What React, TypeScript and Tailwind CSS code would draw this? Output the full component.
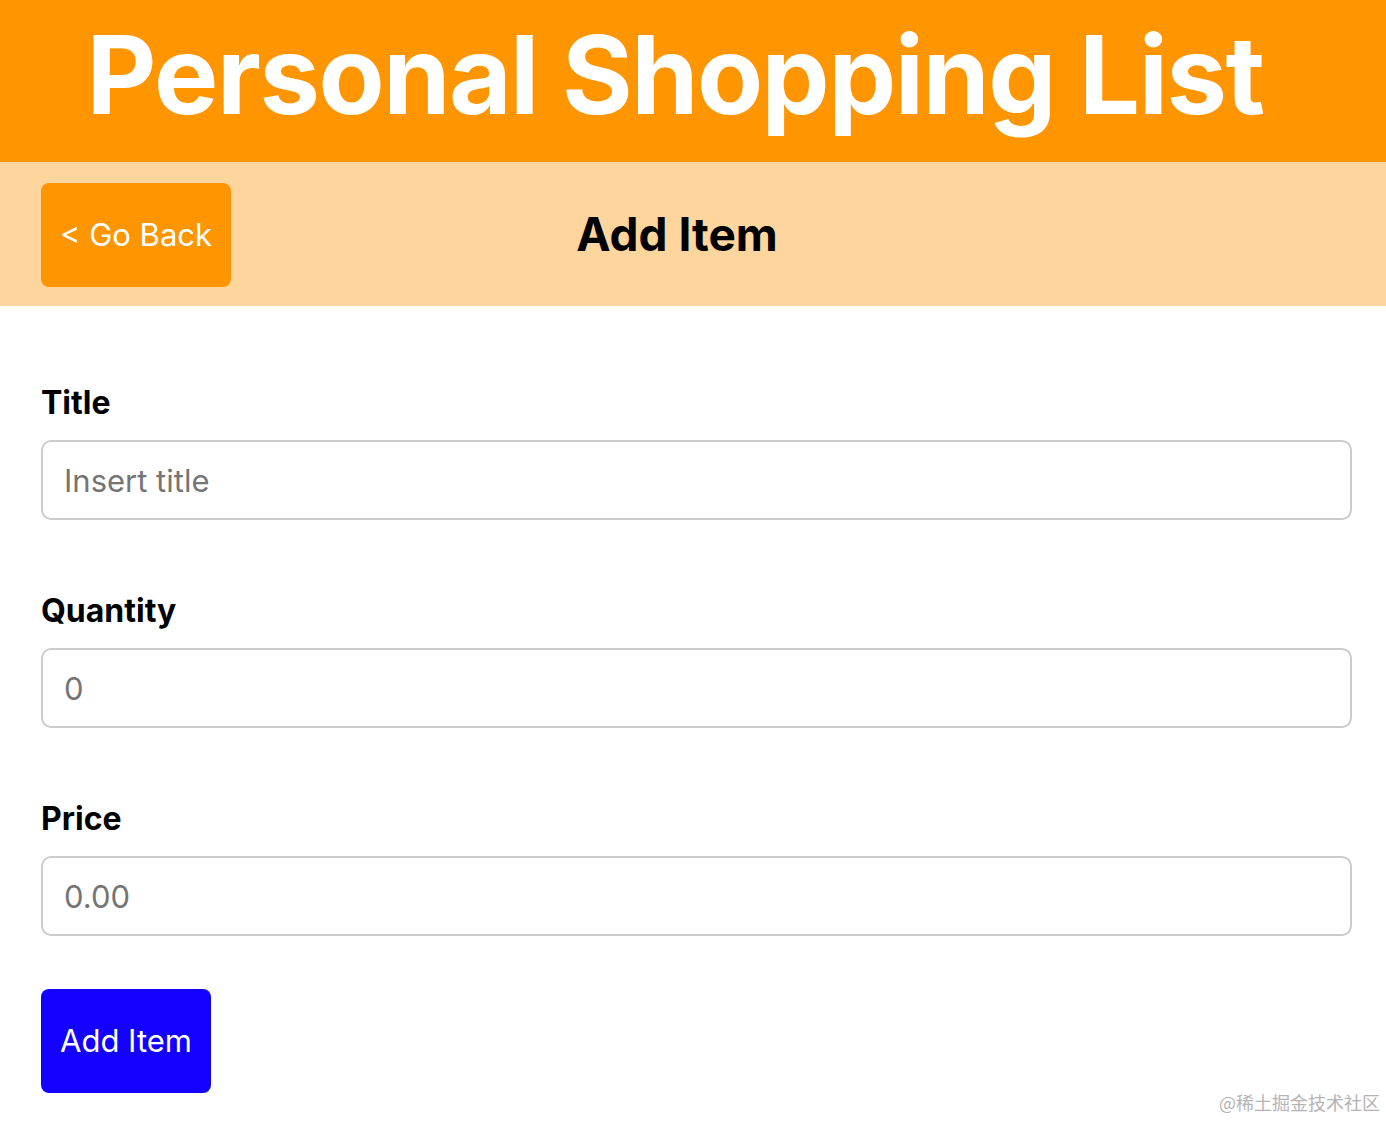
export default function App() {
  const fields = [
    { label: 'Title', placeholder: 'Insert title', type: 'text' },
    { label: 'Quantity', placeholder: '0', type: 'number' },
    { label: 'Price', placeholder: '0.00', type: 'number' },
  ]

  return (
    <div className="min-h-[1122px] bg-white font-['Inter',sans-serif] text-black relative">
      {/* Header */}
      <header className="h-[162px] bg-[#ff9500] flex items-center justify-center pb-[12px]">
        <h1 className="text-[108px] leading-none font-bold text-white tracking-[-1.5px] pr-[36px]">
          Personal Shopping List
        </h1>
      </header>

      {/* Sub header */}
      <div className="h-[144px] bg-[#ffd59e] pl-[41px] pr-[73px] grid grid-cols-[1fr_auto_1fr] items-center">
        <div>
          <button className="mt-[2px] w-[190px] h-[104px] rounded-[8px] bg-[#ff9500] text-white text-[31px] flex items-center justify-center">
            &lt; Go Back
          </button>
        </div>
        <h2 className="text-[46px] font-bold leading-none">Add Item</h2>
        <div />
      </div>

      {/* Form */}
      <form className="pl-[41px] pr-[34px] pt-[77px]" onSubmit={(e) => e.preventDefault()}>
        {fields.map((f) => (
          <div key={f.label} className="mb-[71px]">
            <label className="block text-[32px] font-bold leading-[40px] mb-[17px]">{f.label}</label>
            <input
              type={f.type}
              placeholder={f.placeholder}
              className="w-full h-[80px] border-2 border-[#cccccc] rounded-[10px] px-[21px] text-[31px] placeholder:text-[#757575] outline-none"
            />
          </div>
        ))}
        <button className="-mt-[18px] w-[170px] h-[104px] rounded-[8px] bg-[#1400ff] text-white text-[31px]">
          Add Item
        </button>
      </form>

      <div className="absolute right-[6px] bottom-[6px] text-[18px] text-[#b4b4b4] font-['Noto_Sans_CJK_SC',sans-serif]">
        @稀土掘金技术社区
      </div>
    </div>
  )
}
